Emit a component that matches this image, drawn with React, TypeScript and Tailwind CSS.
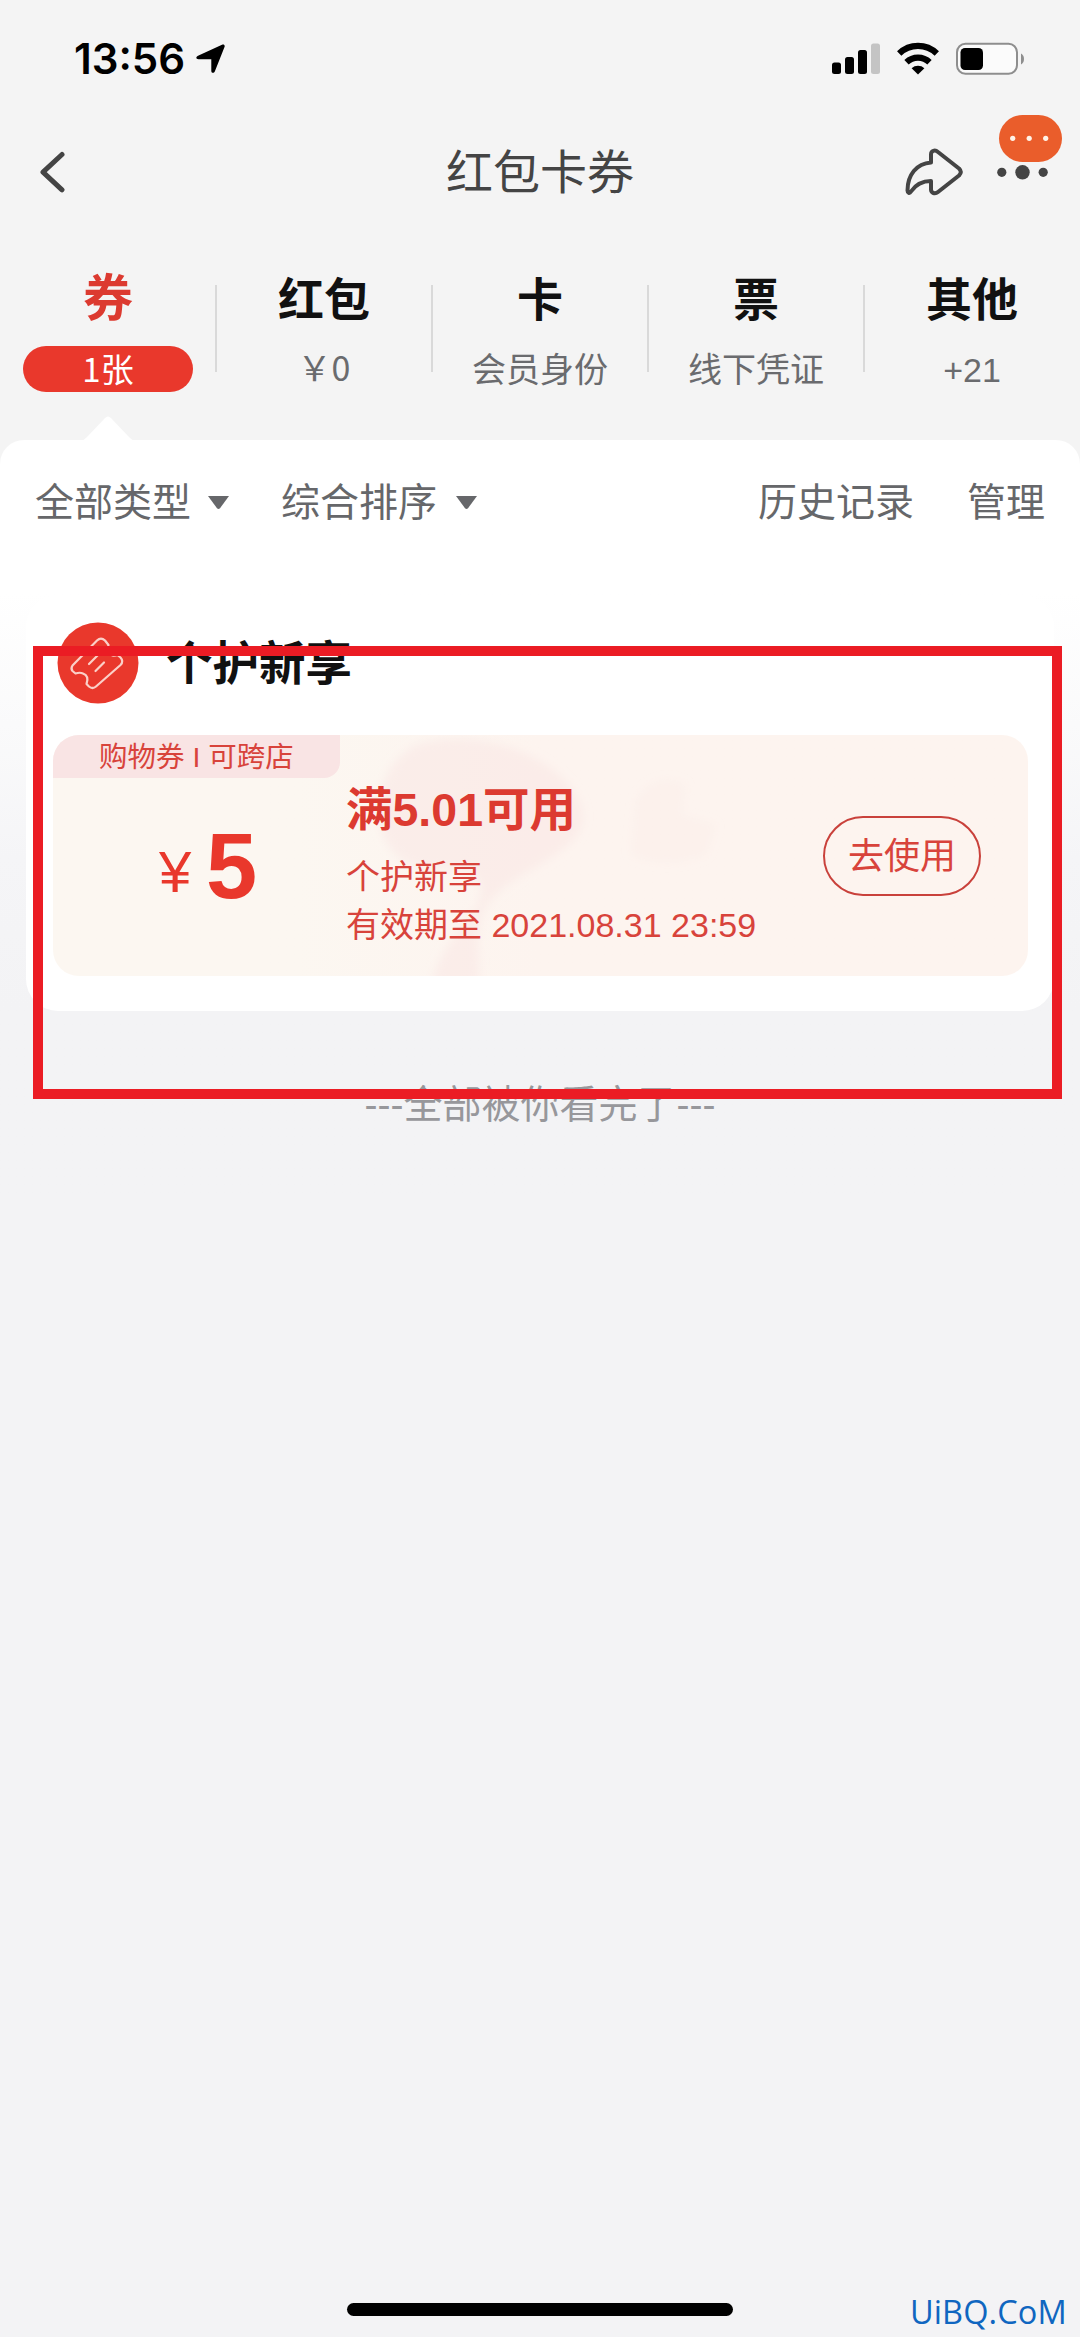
import React from 'react';

const tabs = [
  { name: '红包', note: '￥0' },
  { name: '卡', note: '会员身份' },
  { name: '票', note: '线下凭证' },
  { name: '其他', note: '+21' },
];

function LocationArrow() {
  return (
    <svg className="ml-[11px] h-[30px] w-[29px]" viewBox="0 0 29 30">
      <path d="M2 11.800 26 .8c1.900-.8 3.200.5 2.500 2.300L18.800 27.600c-.8 1.900-3.500 1.600-3.500-.6V15.200H2.500C-.2 15.200-.4 12.900 2 11.800Z" fill="#000" />
    </svg>
  );
}

function StatusIcons() {
  return (
    <svg className="h-[34px] w-[193px]" viewBox="832 42 193 34">
      <rect x="832" y="62.500" width="9" height="11.500" rx="2.500" />
      <rect x="845" y="57" width="9" height="17" rx="2.500" />
      <rect x="858" y="50" width="9" height="24" rx="2.500" />
      <rect x="871" y="43.500" width="9" height="30.500" rx="2.500" fill="#c4c4c4" />
      <g fill="none" stroke="#000" strokeWidth="6.200">
        <path d="M899.200 53.400a27 27 0 0 1 37.600 0" />
        <path d="M906.500 62.300a16.500 16.500 0 0 1 23 0" />
      </g>
      <path d="M911.600 68.200a9.500 9.500 0 0 1 12.800 0L918 74.500Z" />
      <rect x="957" y="43.800" width="60" height="30" rx="8.500" fill="#fbfbfb" stroke="#8e8e8e" strokeWidth="2" />
      <rect x="960.500" y="48" width="22.500" height="22" rx="4.500" />
      <path d="M1021 53.500c4 2 4 9 0 11Z" fill="#8e8e8e" />
    </svg>
  );
}

function Caret() {
  return (
    <svg className="h-[13px] w-[21px]" viewBox="0 0 21 13">
      <path d="M0 0h21L12 12.200q-1.500 1.400-3 0Z" fill="#66676a" />
    </svg>
  );
}

function TicketIcon() {
  return (
    <svg className="h-[82px] w-[82px] shrink-0" viewBox="57 622 82 82">
      <circle cx="98" cy="663" r="40.500" fill="#e9382c" />
      <g fill="none" stroke="#fbd0c8" strokeWidth="2.200" strokeLinecap="round" strokeLinejoin="round">
        <path d="M72.500 665.500 97 640.500q4-4 8 0l3.500 4.500q-3 8 4 10.500 2 .5 5-.5l3 2.500q3.500 4 0 7.500L96 686.500q-3.500 3-7 0l-2.500-2.500q3-8-3.500-10.500-3-1.500-7.500 0l-3-2.500q-2-2.500 0-5.500Z" />
        <path d="m89 664 14-14M95.500 671l8.500-8.500" />
      </g>
    </svg>
  );
}

function CouponPattern() {
  return (
    <svg className="absolute top-0 left-[293px] h-[241px] w-[440px]" viewBox="0 0 440 241">
      <defs>
        <filter id="soften" x="-20%" y="-20%" width="140%" height="140%">
          <feGaussianBlur stdDeviation="5" />
        </filter>
      </defs>
      <g fill="#f9e6e4" fillOpacity="0.5" filter="url(#soften)">
        <path d="M70 10C130-10 215 20 235 70c15 45-60 60-90 95-20 25-10 55-12 90H85c5-50 55-75 50-105-5-25-60-5-85-30C20 90 30 30 70 10Z" />
        <path d="M290 65q20-30 50-15l-5 30 35 10-10 30q-40 15-75 0Z" fillOpacity="0.25" />
      </g>
    </svg>
  );
}

export default function App() {
  return (
    <div className="relative flex h-[2337px] w-[1080px] flex-col overflow-hidden bg-[#f3f3f5] font-['Liberation_Sans','Noto_Sans_CJK_SC',sans-serif]">
      <div className="flex h-[441px] shrink-0 flex-col bg-[#f4f4f4]">
        <div className="flex h-[118px] items-center pr-[55px] pl-[74px]">
          <span className="font-['Inter',sans-serif] text-[42px] leading-[48px] font-semibold text-black">13:56</span>
          <LocationArrow />
          <div className="ml-auto">
            <StatusIcons />
          </div>
        </div>

        <header className="relative flex h-[108px] items-center justify-center">
          <svg className="absolute top-[33px] left-[39px] h-[44px] w-[28px]" viewBox="39 151 28 44">
            <path d="m62 154.500-19 17.700 19 17.700" fill="none" stroke="#444" strokeWidth="5" strokeLinecap="round" strokeLinejoin="round" />
          </svg>
          <h1 className="pt-[2px] text-[47px] leading-[60px] text-[#444]">红包卡券</h1>
          <svg className="absolute top-[-6px] left-[900px] h-[88px] w-[166px]" viewBox="900 112 166 88">
            <path
              d="M931 162.500v-8c0-4 4-5 7-2.500l21 16.500q3.500 3.500 0 7l-21 16.500c-3 2.500-7 1-7-2.500v-8.500c-9 0-15 3-20 10.500-1.500 2.500-3.500 1.500-3.500-1 0-15.500 9-27 23.500-28Z"
              fill="none"
              stroke="#444"
              strokeWidth="4"
              strokeLinejoin="round"
            />
            <rect x="999" y="115" width="63" height="47" rx="23.500" fill="#ea5d2b" />
            <circle cx="1012.700" cy="138.300" r="2.600" fill="#fff3e8" />
            <circle cx="1029.200" cy="138.300" r="2.600" fill="#fff3e8" />
            <circle cx="1045.700" cy="138.300" r="2.600" fill="#fff3e8" />
            <circle cx="1001.800" cy="172.300" r="4.600" fill="#444" />
            <circle cx="1022.500" cy="172.300" r="7.200" fill="#444" />
            <circle cx="1043.200" cy="172.300" r="4.600" fill="#444" />
          </svg>
        </header>

        <nav className="grid h-[215px] grid-cols-5 pt-[44px] text-center">
          <div className="relative flex flex-col items-center">
            <span className="-mt-px text-[50px] leading-[60px] font-bold text-[#dc3a30]">券</span>
            <span className="mt-[17px] flex h-[46px] w-[170px] items-center justify-center rounded-full bg-[#e9382c] pb-[3px] font-['Noto_Sans_CJK_SC',sans-serif] text-[33px] leading-[46px] text-white">
              1张
            </span>
            <svg className="absolute bottom-0 left-[80px] h-[25px] w-[56px]" viewBox="0 0 56 25">
              <path d="M0 25q4-.5 7-4L25 2q3-3 6 0l18 19q3 3.500 7 4Z" fill="#fff" />
            </svg>
          </div>
          {tabs.map((tab) => (
            <div key={tab.name} className="relative flex flex-col items-center">
              <i className="absolute top-[15px] left-[-1px] h-[87px] w-[2px] bg-[#d9d9d9]" />
              <span className="text-[46px] leading-[60px] font-bold text-[#111]">{tab.name}</span>
              <span
                className={
                  tab.note === '￥0'
                    ? "mt-[14px] font-['Noto_Sans_CJK_SC',sans-serif] text-[34px] leading-[46px] text-[#6a6b6e]"
                    : 'mt-[17px] text-[34px] leading-[46px] text-[#6a6b6e]'
                }
              >
                {tab.note}
              </span>
            </div>
          ))}
        </nav>
      </div>

      <div className="-mt-px flex shrink-0 flex-col bg-[#f4f4f4]">
        <main className="flex h-[760px] flex-col rounded-t-[24px] bg-linear-to-b from-white from-20% via-[#f5f5f7] via-55% to-[#f3f3f5] to-75%">
          <div className="flex h-[125px] items-center pt-px pr-[35px] pl-[35px] text-[39px] leading-[50px] text-[#66676a]">
            <span>全部类型</span>
            <span className="-mt-[2px] ml-[17px] flex"><Caret /></span>
            <span className="ml-[52px]">综合排序</span>
            <span className="-mt-[2px] ml-[19px] flex"><Caret /></span>
            <span className="ml-auto">历史记录</span>
            <span className="ml-[53px]">管理</span>
          </div>

          <section className="mx-[26px] mt-[30px] flex h-[416px] flex-col rounded-[32px] bg-white px-[27px]">
            <div className="ml-[4px] flex h-[140px] items-start pt-[27px]">
              <TicketIcon />
              <h2 className="mt-[12px] ml-[27px] text-[46.500px] leading-[60px] font-bold text-[#111]">个护新享</h2>
            </div>
            <div className="relative flex h-[241px] w-[975px] overflow-hidden rounded-[26px] bg-linear-to-r from-[#fcf7f1] from-25% to-[#fdf4ef] to-50% text-[#d8433b]">
              <CouponPattern />
              <div className="relative flex w-[293px] shrink-0 flex-col">
                <span className="h-[43px] w-[287px] rounded-br-[16px] bg-[#f9e4e4] text-center text-[28.500px] leading-[45px]">购物券 I 可跨店</span>
                <div className="flex items-start pl-[106px] text-[#e9382c]">
                  <span className="w-[47px] text-[58px] leading-[188px]">¥</span>
                  <span className="text-[92px] leading-[176px] font-bold">5</span>
                </div>
              </div>
              <div className="relative flex flex-1 flex-col pt-[45px]">
                <span className="text-[46.500px] leading-[60px] font-bold text-[#dc3a30]">满5.01可用</span>
                <span className="mt-[13px] text-[34px] leading-[48px]">个护新享</span>
                <span className="text-[34px] leading-[48px]">有效期至 2021.08.31 23:59</span>
              </div>
              <button className="relative mt-[81px] mr-[47px] h-[80px] w-[158px] rounded-full border-[2px] border-[#c9413b] text-[36px] leading-[77px]">去使用</button>
            </div>
          </section>
          <p className="mt-[65px] text-center text-[39px] leading-[58px] text-[#97979b]">---全部被你看完了---</p>
        </main>
      </div>

      <div className="absolute top-[646px] left-[33px] h-[453px] w-[1029px] border-[10px] border-[#eb1c24]" />

      <footer className="mt-auto flex h-[46px] shrink-0 items-start pl-[347px]">
        <div className="mt-[12px] h-[13px] w-[386px] rounded-full bg-black" />
        <span className="mt-[-2px] ml-[177px] font-['Open_Sans',sans-serif] text-[32.500px] leading-[46px] tracking-[0.1px] text-[#0f66c0]">UiBQ.CoM</span>
      </footer>
    </div>
  );
}
